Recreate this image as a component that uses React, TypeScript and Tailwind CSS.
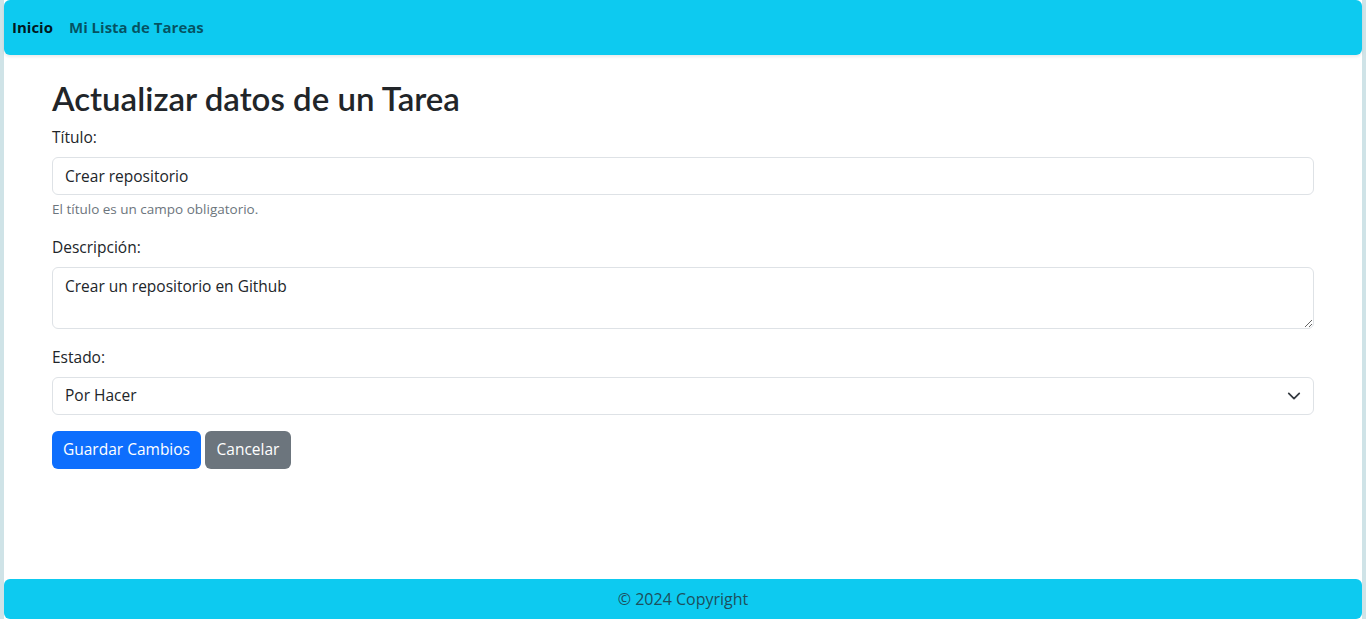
import { ChangeEvent, useState } from 'react';

const App = () => {
  const [titulo, setTitulo] = useState('Crear repositorio');
  const [descripcion, setDescripcion] = useState('Crear un repositorio en Github');
  const [estado, setEstado] = useState('Por Hacer');

  return (
    <div className="min-h-screen bg-[#cfe3e7] px-1 flex flex-col font-['Open_Sans',sans-serif] text-[#212529]">
      <div className="flex-1 bg-white flex flex-col">
        {/* Navbar */}
        <nav className="h-[55px] bg-[#0dcaf0] rounded-md flex items-center px-2 gap-4 text-[15px] font-bold shadow-[0_2px_3px_rgba(0,0,0,0.08)]">
          <a className="text-black/90 cursor-pointer">Inicio</a>
          <a className="text-black/60 cursor-pointer">Mi Lista de Tareas</a>
        </nav>

        <main className="px-12 pt-6 text-[15.5px]">
          <h1 className="font-['Lato',sans-serif] text-[33px] leading-[38px] font-semibold mb-2">Actualizar datos de un Tarea</h1>

          <form onSubmit={e => e.preventDefault()}>
            <div className="mb-4">
              <label className="block leading-6 mb-2">Título:</label>
              <input
                value={titulo}
                onChange={(e: ChangeEvent<HTMLInputElement>) => setTitulo(e.target.value)}
                className="w-full h-[38px] px-3 border border-[#dee2e6] rounded-md outline-none"
              />
              <div className="mt-1 text-[13.5px] leading-5 text-[#6c757d]">El título es un campo obligatorio.</div>
            </div>

            <div className="mb-4">
              <label className="block leading-6 mb-2">Descripción:</label>
              <textarea
                value={descripcion}
                onChange={(e: ChangeEvent<HTMLTextAreaElement>) => setDescripcion(e.target.value)}
                className="block w-full h-[62px] px-3 py-1.5 border border-[#dee2e6] rounded-md leading-6 outline-none"
              />
            </div>

            <div className="mb-4">
              <label className="block leading-6 mb-2">Estado:</label>
              <div className="relative">
                <select
                  value={estado}
                  onChange={(e: ChangeEvent<HTMLSelectElement>) => setEstado(e.target.value)}
                  className="appearance-none w-full h-[38px] pl-3 pr-9 border border-[#dee2e6] rounded-md bg-white outline-none"
                >
                  <option>Por Hacer</option>
                  <option>En Progreso</option>
                  <option>Completada</option>
                </select>
                <svg className="absolute right-[13px] top-[12px] w-[14px] h-[14px] pointer-events-none" viewBox="0 0 16 16" fill="none">
                  <path d="m2 5 6 6 6-6" stroke="#343a40" strokeWidth="2" strokeLinecap="round" strokeLinejoin="round" />
                </svg>
              </div>
            </div>

            <div className="flex gap-1">
              <button type="submit" className="h-[38px] w-[149px] rounded-md bg-[#0d6efd] text-white flex items-center justify-center">Guardar Cambios</button>
              <button type="button" className="h-[38px] w-[86px] rounded-md bg-[#6c757d] text-white flex items-center justify-center">Cancelar</button>
            </div>
          </form>
        </main>

        {/* Footer */}
        <footer className="mt-auto h-10 bg-[#0dcaf0] rounded-md flex items-center justify-center text-base text-[#1d4f5c]">
          © 2024 Copyright
        </footer>
      </div>
    </div>
  );
};

export default App;
